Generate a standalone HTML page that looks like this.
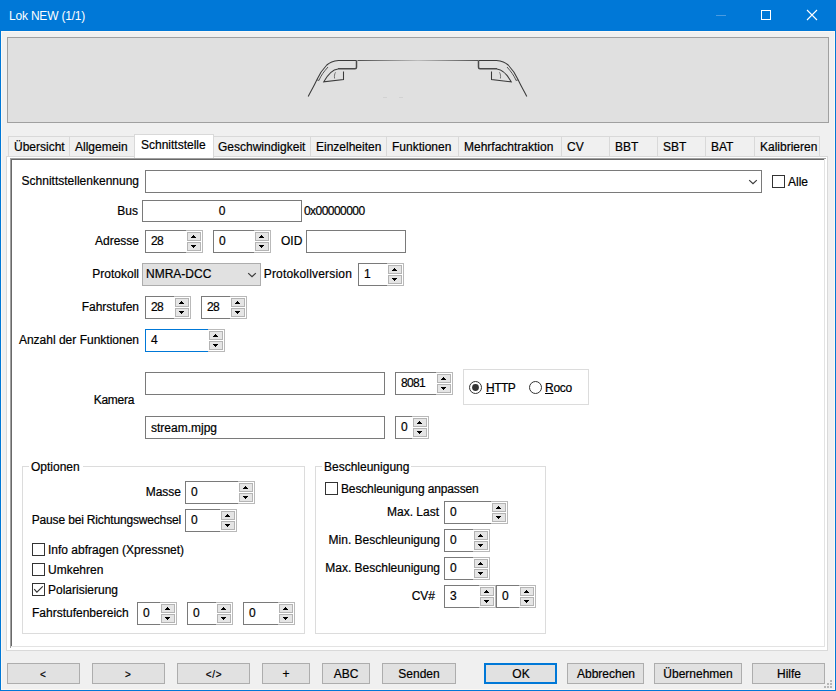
<!DOCTYPE html>
<html><head><meta charset="utf-8"><style>
html,body{margin:0;padding:0;}
body{width:836px;height:691px;overflow:hidden;position:relative;background:#f0f0f0;font-family:"Liberation Sans", sans-serif;font-size:12px;}
body div, body svg{position:absolute;box-sizing:content-box;}
.t{white-space:nowrap;line-height:14px;font-size:12px;color:#000;-webkit-text-stroke:0.2px currentColor;}
</style></head><body>

<div style="left:0px;top:0px;width:836px;height:31px;background:#0078d7"></div>
<div style="left:0px;top:0px;width:1px;height:691px;background:#0078d7"></div>
<div style="left:835px;top:0px;width:1px;height:691px;background:#0078d7"></div>
<div style="left:0px;top:690px;width:836px;height:1px;background:#0078d7"></div>
<div style="left:1px;top:31px;width:834px;height:1px;background:#fbf8f4"></div>
<div style="left:1px;top:31px;width:1px;height:659px;background:#fbf8f4"></div>
<div style="left:834px;top:31px;width:1px;height:659px;background:#fbf8f4"></div>
<div style="left:1px;top:689px;width:834px;height:1px;background:#fbf8f4"></div>
<div class="t" style="left:9px;top:9px;color:#fff;letter-spacing:-0.2px;-webkit-text-stroke:0">Lok NEW (1/1)</div>
<div style="left:716px;top:15px;width:10px;height:1px;background:#4a9be0"></div>
<div style="left:761px;top:10px;width:8px;height:8px;border:1px solid #fff;background:transparent;"></div>
<svg style="left:806px;top:9px" width="12" height="12"><path d="M1 1L11 11M11 1L1 11" stroke="#fff" stroke-width="1.1" fill="none"/></svg>
<div style="left:7px;top:37px;width:820px;height:84px;border:1px solid #a0a0a0;background:#e0e0e0;"></div>
<svg style="left:0;top:0" width="836" height="130">
<defs><linearGradient id="rg" gradientUnits="userSpaceOnUse" x1="358" x2="478" y1="0" y2="0"><stop offset="0" stop-color="#505050"/><stop offset="0.5" stop-color="#bdbdbd"/><stop offset="1" stop-color="#505050"/></linearGradient>

</defs>
<g fill="none" stroke="#3a3a3a">
<path d="M356.5 60.5H338.5C333.5 61 329.5 62.5 326.8 65C322 70 319 75 317 79.5C314 86 311 91 308.2 96.5" stroke-width="1.05"/>
<path d="M328 67C324 71.5 321 75.5 319 80.2" stroke-width="0.9" stroke="#444"/>
<path d="M317 79.8L319.2 80.5" stroke-width="0.9" stroke="#444"/>
<path d="M356.5 60.5V67.3Q356.5 68.8 355 68.8H338" stroke-width="1.5" stroke="#4a4a4a"/>
<path d="M338 69C333 69.5 329 72.5 323.8 81.8L343.5 79.5V71.5" stroke-width="1.05"/>
<path d="M335.5 72.3C334.5 74 334.2 76 334.6 78.5" stroke-width="0.9" stroke="#666"/>
</g>
<g fill="none" stroke="#3a3a3a" transform="translate(835,0) scale(-1,1)">
<path d="M356.5 60.5H338.5C333.5 61 329.5 62.5 326.8 65C322 70 319 75 317 79.5C314 86 311 91 308.2 96.5" stroke-width="1.05"/>
<path d="M328 67C324 71.5 321 75.5 319 80.2" stroke-width="0.9" stroke="#444"/>
<path d="M317 79.8L319.2 80.5" stroke-width="0.9" stroke="#444"/>
<path d="M356.5 60.5V67.3Q356.5 68.8 355 68.8H338" stroke-width="1.5" stroke="#4a4a4a"/>
<path d="M338 69C333 69.5 329 72.5 323.8 81.8L343.5 79.5V71.5" stroke-width="1.05"/>
<path d="M335.5 72.3C334.5 74 334.2 76 334.6 78.5" stroke-width="0.9" stroke="#666"/>
</g>
<path d="M357.5 60.5H478" stroke="url(#rg)" stroke-width="1" fill="none"/><rect x="383" y="97" width="4" height="1" fill="#d2d2d2"/><rect x="399" y="97" width="4" height="1" fill="#d2d2d2"/>
</svg>
<div style="left:6px;top:156px;width:820px;height:493px;border:1px solid #d9d9d9;background:#fff;"></div>
<div style="left:8px;top:136px;width:60px;height:19px;border:1px solid #d9d9d9;background:#f0f0f0;"></div>
<div class="t" style="left:14px;top:140px;color:#000;">Übersicht</div>
<div style="left:69px;top:136px;width:66px;height:19px;border:1px solid #d9d9d9;background:#f0f0f0;"></div>
<div class="t" style="left:75px;top:140px;color:#000;">Allgemein</div>
<div style="left:212px;top:136px;width:97px;height:19px;border:1px solid #d9d9d9;background:#f0f0f0;"></div>
<div class="t" style="left:218px;top:140px;color:#000;">Geschwindigkeit</div>
<div style="left:310px;top:136px;width:75px;height:19px;border:1px solid #d9d9d9;background:#f0f0f0;"></div>
<div class="t" style="left:316px;top:140px;color:#000;">Einzelheiten</div>
<div style="left:386px;top:136px;width:71px;height:19px;border:1px solid #d9d9d9;background:#f0f0f0;"></div>
<div class="t" style="left:392px;top:140px;color:#000;">Funktionen</div>
<div style="left:458px;top:136px;width:102px;height:19px;border:1px solid #d9d9d9;background:#f0f0f0;"></div>
<div class="t" style="left:464px;top:140px;color:#000;">Mehrfachtraktion</div>
<div style="left:561px;top:136px;width:47px;height:19px;border:1px solid #d9d9d9;background:#f0f0f0;"></div>
<div class="t" style="left:567px;top:140px;color:#000;">CV</div>
<div style="left:609px;top:136px;width:47px;height:19px;border:1px solid #d9d9d9;background:#f0f0f0;"></div>
<div class="t" style="left:615px;top:140px;color:#000;">BBT</div>
<div style="left:657px;top:136px;width:47px;height:19px;border:1px solid #d9d9d9;background:#f0f0f0;"></div>
<div class="t" style="left:663px;top:140px;color:#000;">SBT</div>
<div style="left:705px;top:136px;width:48px;height:19px;border:1px solid #d9d9d9;background:#f0f0f0;"></div>
<div class="t" style="left:711px;top:140px;color:#000;">BAT</div>
<div style="left:754px;top:136px;width:64px;height:19px;border:1px solid #d9d9d9;background:#f0f0f0;"></div>
<div class="t" style="left:760px;top:140px;color:#000;">Kalibrieren</div>
<div style="left:134px;top:134px;width:78px;height:23px;border:1px solid #d9d9d9;border-bottom:none;background:#fff"></div>
<div class="t" style="left:141px;top:138px;color:#000;">Schnittstelle</div>
<div style="left:10px;top:158px;width:816px;height:1px;background:#a0a0a0"></div>
<div style="left:10px;top:158px;width:1px;height:490px;background:#a0a0a0"></div>
<div style="left:11px;top:159px;width:814px;height:1px;background:#696969"></div>
<div style="left:11px;top:159px;width:1px;height:488px;background:#696969"></div>
<div style="left:11px;top:646px;width:814px;height:1px;background:#e3e3e3"></div>
<div style="left:824px;top:159px;width:1px;height:488px;background:#e3e3e3"></div>
<div class="t" style="right:697px;top:174px;color:#000;text-align:right;">Schnittstellenkennung</div>
<div style="left:145px;top:170px;width:615px;height:21px;border:1px solid #7a7a7a;background:#fff;"></div>
<svg style="left:748px;top:179px" width="11" height="7"><path d="M1.2 1.1L5 4.7L8.8 1.1" fill="none" stroke="#3a3a3a" stroke-width="1.2"/></svg>
<div style="left:772px;top:175px;width:11px;height:11px;border:1px solid #333;background:#fff;"></div>
<div class="t" style="left:788px;top:175px;color:#000;">Alle</div>
<div class="t" style="right:698px;top:204px;color:#000;text-align:right;">Bus</div>
<div style="left:142px;top:200px;width:158px;height:20px;border:1px solid #7a7a7a;background:#fff;"></div>
<div class="t" style="left:22px;width:400px;top:204px;color:#000;text-align:center;">0</div>
<div class="t" style="left:304px;top:204px;color:#000;letter-spacing:-0.55px">0x00000000</div>
<div class="t" style="right:697px;top:234px;color:#000;text-align:right;">Adresse</div>
<div style="left:145px;top:230px;width:58px;height:23px;background:#fff"></div>
<div style="left:145px;top:230px;width:41px;height:1px;background:#7a7a7a"></div>
<div style="left:145px;top:252px;width:41px;height:1px;background:#7a7a7a"></div>
<div style="left:145px;top:230px;width:1px;height:23px;background:#7a7a7a"></div>
<div style="left:186px;top:230px;width:17px;height:1px;background:#b9b9b9"></div>
<div style="left:186px;top:252px;width:17px;height:1px;background:#b9b9b9"></div>
<div style="left:202px;top:230px;width:1px;height:23px;background:#b9b9b9"></div>
<div style="left:187px;top:232px;width:12px;height:7px;border:1px solid #b4b4b4;background:#e5e5e5;"></div>
<div style="left:187px;top:242px;width:12px;height:7px;border:1px solid #b4b4b4;background:#e5e5e5;"></div>
<div class="t" style="left:151px;top:234px;color:#000;letter-spacing:-0.7px">28</div>
<div style="left:213px;top:230px;width:58px;height:23px;background:#fff"></div>
<div style="left:213px;top:230px;width:41px;height:1px;background:#7a7a7a"></div>
<div style="left:213px;top:252px;width:41px;height:1px;background:#7a7a7a"></div>
<div style="left:213px;top:230px;width:1px;height:23px;background:#7a7a7a"></div>
<div style="left:254px;top:230px;width:17px;height:1px;background:#b9b9b9"></div>
<div style="left:254px;top:252px;width:17px;height:1px;background:#b9b9b9"></div>
<div style="left:270px;top:230px;width:1px;height:23px;background:#b9b9b9"></div>
<div style="left:255px;top:232px;width:12px;height:7px;border:1px solid #b4b4b4;background:#e5e5e5;"></div>
<div style="left:255px;top:242px;width:12px;height:7px;border:1px solid #b4b4b4;background:#e5e5e5;"></div>
<div class="t" style="left:219px;top:234px;color:#000;letter-spacing:-0.7px">0</div>
<div class="t" style="left:281px;top:234px;color:#000;">OID</div>
<div style="left:306px;top:230px;width:98px;height:21px;border:1px solid #7a7a7a;background:#fff;"></div>
<div class="t" style="right:697px;top:267px;color:#000;text-align:right;">Protokoll</div>
<div style="left:142px;top:263px;width:117px;height:21px;border:1px solid #adadad;background:#e1e1e1;"></div>
<div class="t" style="left:146px;top:267px;color:#000;">NMRA-DCC</div>
<svg style="left:247px;top:272px" width="11" height="7"><path d="M1.2 1.1L5 4.7L8.8 1.1" fill="none" stroke="#3a3a3a" stroke-width="1.2"/></svg>
<div class="t" style="right:484px;top:267px;color:#000;text-align:right;letter-spacing:0.18px">Protokollversion</div>
<div style="left:358px;top:263px;width:46px;height:23px;background:#fff"></div>
<div style="left:358px;top:263px;width:29px;height:1px;background:#7a7a7a"></div>
<div style="left:358px;top:285px;width:29px;height:1px;background:#7a7a7a"></div>
<div style="left:358px;top:263px;width:1px;height:23px;background:#7a7a7a"></div>
<div style="left:387px;top:263px;width:17px;height:1px;background:#b9b9b9"></div>
<div style="left:387px;top:285px;width:17px;height:1px;background:#b9b9b9"></div>
<div style="left:403px;top:263px;width:1px;height:23px;background:#b9b9b9"></div>
<div style="left:388px;top:265px;width:12px;height:7px;border:1px solid #b4b4b4;background:#e5e5e5;"></div>
<div style="left:388px;top:275px;width:12px;height:7px;border:1px solid #b4b4b4;background:#e5e5e5;"></div>
<div class="t" style="left:364px;top:267px;color:#000;letter-spacing:-0.7px">1</div>
<div class="t" style="right:697px;top:300px;color:#000;text-align:right;">Fahrstufen</div>
<div style="left:145px;top:296px;width:46px;height:23px;background:#fff"></div>
<div style="left:145px;top:296px;width:29px;height:1px;background:#7a7a7a"></div>
<div style="left:145px;top:318px;width:29px;height:1px;background:#7a7a7a"></div>
<div style="left:145px;top:296px;width:1px;height:23px;background:#7a7a7a"></div>
<div style="left:174px;top:296px;width:17px;height:1px;background:#b9b9b9"></div>
<div style="left:174px;top:318px;width:17px;height:1px;background:#b9b9b9"></div>
<div style="left:190px;top:296px;width:1px;height:23px;background:#b9b9b9"></div>
<div style="left:175px;top:298px;width:12px;height:7px;border:1px solid #b4b4b4;background:#e5e5e5;"></div>
<div style="left:175px;top:308px;width:12px;height:7px;border:1px solid #b4b4b4;background:#e5e5e5;"></div>
<div class="t" style="left:151px;top:300px;color:#000;letter-spacing:-0.7px">28</div>
<div style="left:201px;top:296px;width:46px;height:23px;background:#fff"></div>
<div style="left:201px;top:296px;width:29px;height:1px;background:#7a7a7a"></div>
<div style="left:201px;top:318px;width:29px;height:1px;background:#7a7a7a"></div>
<div style="left:201px;top:296px;width:1px;height:23px;background:#7a7a7a"></div>
<div style="left:230px;top:296px;width:17px;height:1px;background:#b9b9b9"></div>
<div style="left:230px;top:318px;width:17px;height:1px;background:#b9b9b9"></div>
<div style="left:246px;top:296px;width:1px;height:23px;background:#b9b9b9"></div>
<div style="left:231px;top:298px;width:12px;height:7px;border:1px solid #b4b4b4;background:#e5e5e5;"></div>
<div style="left:231px;top:308px;width:12px;height:7px;border:1px solid #b4b4b4;background:#e5e5e5;"></div>
<div class="t" style="left:207px;top:300px;color:#000;letter-spacing:-0.7px">28</div>
<div class="t" style="right:697px;top:333px;color:#000;text-align:right;">Anzahl der Funktionen</div>
<div style="left:145px;top:329px;width:80px;height:23px;background:#fff"></div>
<div style="left:145px;top:329px;width:63px;height:1px;background:#0078d7"></div>
<div style="left:145px;top:351px;width:63px;height:1px;background:#0078d7"></div>
<div style="left:145px;top:329px;width:1px;height:23px;background:#0078d7"></div>
<div style="left:208px;top:329px;width:17px;height:1px;background:#b9b9b9"></div>
<div style="left:208px;top:351px;width:17px;height:1px;background:#b9b9b9"></div>
<div style="left:224px;top:329px;width:1px;height:23px;background:#b9b9b9"></div>
<div style="left:209px;top:331px;width:12px;height:7px;border:1px solid #b4b4b4;background:#e5e5e5;"></div>
<div style="left:209px;top:341px;width:12px;height:7px;border:1px solid #b4b4b4;background:#e5e5e5;"></div>
<div class="t" style="left:151px;top:333px;color:#000;letter-spacing:-0.7px">4</div>
<div class="t" style="right:702px;top:393px;color:#000;text-align:right;letter-spacing:-0.3px">Kamera</div>
<div style="left:145px;top:372px;width:238px;height:21px;border:1px solid #7a7a7a;background:#fff;"></div>
<div style="left:395px;top:372px;width:58px;height:23px;background:#fff"></div>
<div style="left:395px;top:372px;width:41px;height:1px;background:#7a7a7a"></div>
<div style="left:395px;top:394px;width:41px;height:1px;background:#7a7a7a"></div>
<div style="left:395px;top:372px;width:1px;height:23px;background:#7a7a7a"></div>
<div style="left:436px;top:372px;width:17px;height:1px;background:#b9b9b9"></div>
<div style="left:436px;top:394px;width:17px;height:1px;background:#b9b9b9"></div>
<div style="left:452px;top:372px;width:1px;height:23px;background:#b9b9b9"></div>
<div style="left:437px;top:374px;width:12px;height:7px;border:1px solid #b4b4b4;background:#e5e5e5;"></div>
<div style="left:437px;top:384px;width:12px;height:7px;border:1px solid #b4b4b4;background:#e5e5e5;"></div>
<div class="t" style="left:401px;top:376px;color:#000;letter-spacing:-0.7px">8081</div>
<div style="left:145px;top:416px;width:238px;height:21px;border:1px solid #7a7a7a;background:#fff;"></div>
<div class="t" style="left:151px;top:421px;color:#000;">stream.mjpg</div>
<div style="left:395px;top:416px;width:34px;height:23px;background:#fff"></div>
<div style="left:395px;top:416px;width:17px;height:1px;background:#7a7a7a"></div>
<div style="left:395px;top:438px;width:17px;height:1px;background:#7a7a7a"></div>
<div style="left:395px;top:416px;width:1px;height:23px;background:#7a7a7a"></div>
<div style="left:412px;top:416px;width:17px;height:1px;background:#b9b9b9"></div>
<div style="left:412px;top:438px;width:17px;height:1px;background:#b9b9b9"></div>
<div style="left:428px;top:416px;width:1px;height:23px;background:#b9b9b9"></div>
<div style="left:413px;top:418px;width:12px;height:7px;border:1px solid #b4b4b4;background:#e5e5e5;"></div>
<div style="left:413px;top:428px;width:12px;height:7px;border:1px solid #b4b4b4;background:#e5e5e5;"></div>
<div class="t" style="left:401px;top:420px;color:#000;letter-spacing:-0.7px">0</div>
<div style="left:463px;top:369px;width:124px;height:34px;border:1px solid #dcdcdc;background:transparent;"></div>
<svg style="left:468px;top:380px" width="15" height="15"><circle cx="7.5" cy="7.5" r="6" fill="#fff" stroke="#333" stroke-width="1"/><circle cx="7.5" cy="7.5" r="3.4" fill="#333"/></svg>
<div class="t" style="left:486px;top:381px;color:#000;letter-spacing:-0.55px"><u>H</u>TTP</div>
<svg style="left:528px;top:380px" width="15" height="15"><circle cx="7.5" cy="7.5" r="6" fill="#fff" stroke="#333" stroke-width="1"/></svg>
<div class="t" style="left:545px;top:381px;color:#000;letter-spacing:-0.25px"><u>R</u>oco</div>
<div style="left:22px;top:466px;width:281px;height:166px;border:1px solid #dcdcdc;background:transparent;"></div>
<div style="left:29px;top:460px;width:54px;height:12px;background:#fff"></div>
<div class="t" style="left:31px;top:460px;color:#000;">Optionen</div>
<div class="t" style="right:655px;top:485px;color:#000;text-align:right;">Masse</div>
<div style="left:185px;top:481px;width:70px;height:23px;background:#fff"></div>
<div style="left:185px;top:481px;width:53px;height:1px;background:#7a7a7a"></div>
<div style="left:185px;top:503px;width:53px;height:1px;background:#7a7a7a"></div>
<div style="left:185px;top:481px;width:1px;height:23px;background:#7a7a7a"></div>
<div style="left:238px;top:481px;width:17px;height:1px;background:#b9b9b9"></div>
<div style="left:238px;top:503px;width:17px;height:1px;background:#b9b9b9"></div>
<div style="left:254px;top:481px;width:1px;height:23px;background:#b9b9b9"></div>
<div style="left:239px;top:483px;width:12px;height:7px;border:1px solid #b4b4b4;background:#e5e5e5;"></div>
<div style="left:239px;top:493px;width:12px;height:7px;border:1px solid #b4b4b4;background:#e5e5e5;"></div>
<div class="t" style="left:191px;top:485px;color:#000;letter-spacing:-0.7px">0</div>
<div class="t" style="right:655px;top:513px;color:#000;text-align:right;letter-spacing:-0.16px">Pause bei Richtungswechsel</div>
<div style="left:185px;top:509px;width:52px;height:23px;background:#fff"></div>
<div style="left:185px;top:509px;width:35px;height:1px;background:#7a7a7a"></div>
<div style="left:185px;top:531px;width:35px;height:1px;background:#7a7a7a"></div>
<div style="left:185px;top:509px;width:1px;height:23px;background:#7a7a7a"></div>
<div style="left:220px;top:509px;width:17px;height:1px;background:#b9b9b9"></div>
<div style="left:220px;top:531px;width:17px;height:1px;background:#b9b9b9"></div>
<div style="left:236px;top:509px;width:1px;height:23px;background:#b9b9b9"></div>
<div style="left:221px;top:511px;width:12px;height:7px;border:1px solid #b4b4b4;background:#e5e5e5;"></div>
<div style="left:221px;top:521px;width:12px;height:7px;border:1px solid #b4b4b4;background:#e5e5e5;"></div>
<div class="t" style="left:191px;top:513px;color:#000;letter-spacing:-0.7px">0</div>
<div style="left:32px;top:543px;width:11px;height:11px;border:1px solid #333;background:#fff;"></div>
<div class="t" style="left:48px;top:543px;color:#000;">Info abfragen (Xpressnet)</div>
<div style="left:32px;top:563px;width:11px;height:11px;border:1px solid #333;background:#fff;"></div>
<div class="t" style="left:48px;top:563px;color:#000;">Umkehren</div>
<div style="left:32px;top:583px;width:11px;height:11px;border:1px solid #333;background:#fff;"></div>
<svg style="left:32px;top:583px" width="13" height="13"><path d="M2.2 6.1L4.9 9.1L10.8 3.3" fill="none" stroke="#333" stroke-width="1.15"/></svg>
<div class="t" style="left:48px;top:583px;color:#000;">Polarisierung</div>
<div class="t" style="left:32px;top:606px;color:#000;">Fahrstufenbereich</div>
<div style="left:137px;top:602px;width:40px;height:23px;background:#fff"></div>
<div style="left:137px;top:602px;width:23px;height:1px;background:#7a7a7a"></div>
<div style="left:137px;top:624px;width:23px;height:1px;background:#7a7a7a"></div>
<div style="left:137px;top:602px;width:1px;height:23px;background:#7a7a7a"></div>
<div style="left:160px;top:602px;width:17px;height:1px;background:#b9b9b9"></div>
<div style="left:160px;top:624px;width:17px;height:1px;background:#b9b9b9"></div>
<div style="left:176px;top:602px;width:1px;height:23px;background:#b9b9b9"></div>
<div style="left:161px;top:604px;width:12px;height:7px;border:1px solid #b4b4b4;background:#e5e5e5;"></div>
<div style="left:161px;top:614px;width:12px;height:7px;border:1px solid #b4b4b4;background:#e5e5e5;"></div>
<div class="t" style="left:143px;top:606px;color:#000;letter-spacing:-0.7px">0</div>
<div style="left:187px;top:602px;width:46px;height:23px;background:#fff"></div>
<div style="left:187px;top:602px;width:29px;height:1px;background:#7a7a7a"></div>
<div style="left:187px;top:624px;width:29px;height:1px;background:#7a7a7a"></div>
<div style="left:187px;top:602px;width:1px;height:23px;background:#7a7a7a"></div>
<div style="left:216px;top:602px;width:17px;height:1px;background:#b9b9b9"></div>
<div style="left:216px;top:624px;width:17px;height:1px;background:#b9b9b9"></div>
<div style="left:232px;top:602px;width:1px;height:23px;background:#b9b9b9"></div>
<div style="left:217px;top:604px;width:12px;height:7px;border:1px solid #b4b4b4;background:#e5e5e5;"></div>
<div style="left:217px;top:614px;width:12px;height:7px;border:1px solid #b4b4b4;background:#e5e5e5;"></div>
<div class="t" style="left:193px;top:606px;color:#000;letter-spacing:-0.7px">0</div>
<div style="left:243px;top:602px;width:52px;height:23px;background:#fff"></div>
<div style="left:243px;top:602px;width:35px;height:1px;background:#7a7a7a"></div>
<div style="left:243px;top:624px;width:35px;height:1px;background:#7a7a7a"></div>
<div style="left:243px;top:602px;width:1px;height:23px;background:#7a7a7a"></div>
<div style="left:278px;top:602px;width:17px;height:1px;background:#b9b9b9"></div>
<div style="left:278px;top:624px;width:17px;height:1px;background:#b9b9b9"></div>
<div style="left:294px;top:602px;width:1px;height:23px;background:#b9b9b9"></div>
<div style="left:279px;top:604px;width:12px;height:7px;border:1px solid #b4b4b4;background:#e5e5e5;"></div>
<div style="left:279px;top:614px;width:12px;height:7px;border:1px solid #b4b4b4;background:#e5e5e5;"></div>
<div class="t" style="left:249px;top:606px;color:#000;letter-spacing:-0.7px">0</div>
<div style="left:315px;top:466px;width:229px;height:166px;border:1px solid #dcdcdc;background:transparent;"></div>
<div style="left:322px;top:460px;width:89px;height:12px;background:#fff"></div>
<div class="t" style="left:324px;top:460px;color:#000;">Beschleunigung</div>
<div style="left:325px;top:482px;width:11px;height:11px;border:1px solid #333;background:#fff;"></div>
<div class="t" style="left:341px;top:482px;color:#000;letter-spacing:-0.14px">Beschleunigung anpassen</div>
<div class="t" style="right:397px;top:505px;color:#000;text-align:right;">Max. Last</div>
<div style="left:444px;top:501px;width:64px;height:23px;background:#fff"></div>
<div style="left:444px;top:501px;width:47px;height:1px;background:#7a7a7a"></div>
<div style="left:444px;top:523px;width:47px;height:1px;background:#7a7a7a"></div>
<div style="left:444px;top:501px;width:1px;height:23px;background:#7a7a7a"></div>
<div style="left:491px;top:501px;width:17px;height:1px;background:#b9b9b9"></div>
<div style="left:491px;top:523px;width:17px;height:1px;background:#b9b9b9"></div>
<div style="left:507px;top:501px;width:1px;height:23px;background:#b9b9b9"></div>
<div style="left:492px;top:503px;width:12px;height:7px;border:1px solid #b4b4b4;background:#e5e5e5;"></div>
<div style="left:492px;top:513px;width:12px;height:7px;border:1px solid #b4b4b4;background:#e5e5e5;"></div>
<div class="t" style="left:450px;top:505px;color:#000;letter-spacing:-0.7px">0</div>
<div class="t" style="right:396px;top:533px;color:#000;text-align:right;">Min. Beschleunigung</div>
<div style="left:444px;top:529px;width:46px;height:23px;background:#fff"></div>
<div style="left:444px;top:529px;width:29px;height:1px;background:#7a7a7a"></div>
<div style="left:444px;top:551px;width:29px;height:1px;background:#7a7a7a"></div>
<div style="left:444px;top:529px;width:1px;height:23px;background:#7a7a7a"></div>
<div style="left:473px;top:529px;width:17px;height:1px;background:#b9b9b9"></div>
<div style="left:473px;top:551px;width:17px;height:1px;background:#b9b9b9"></div>
<div style="left:489px;top:529px;width:1px;height:23px;background:#b9b9b9"></div>
<div style="left:474px;top:531px;width:12px;height:7px;border:1px solid #b4b4b4;background:#e5e5e5;"></div>
<div style="left:474px;top:541px;width:12px;height:7px;border:1px solid #b4b4b4;background:#e5e5e5;"></div>
<div class="t" style="left:450px;top:533px;color:#000;letter-spacing:-0.7px">0</div>
<div class="t" style="right:396px;top:561px;color:#000;text-align:right;">Max. Beschleunigung</div>
<div style="left:444px;top:557px;width:46px;height:23px;background:#fff"></div>
<div style="left:444px;top:557px;width:29px;height:1px;background:#7a7a7a"></div>
<div style="left:444px;top:579px;width:29px;height:1px;background:#7a7a7a"></div>
<div style="left:444px;top:557px;width:1px;height:23px;background:#7a7a7a"></div>
<div style="left:473px;top:557px;width:17px;height:1px;background:#b9b9b9"></div>
<div style="left:473px;top:579px;width:17px;height:1px;background:#b9b9b9"></div>
<div style="left:489px;top:557px;width:1px;height:23px;background:#b9b9b9"></div>
<div style="left:474px;top:559px;width:12px;height:7px;border:1px solid #b4b4b4;background:#e5e5e5;"></div>
<div style="left:474px;top:569px;width:12px;height:7px;border:1px solid #b4b4b4;background:#e5e5e5;"></div>
<div class="t" style="left:450px;top:561px;color:#000;letter-spacing:-0.7px">0</div>
<div class="t" style="right:401px;top:589px;color:#000;text-align:right;">CV#</div>
<div style="left:444px;top:585px;width:52px;height:23px;background:#fff"></div>
<div style="left:444px;top:585px;width:35px;height:1px;background:#7a7a7a"></div>
<div style="left:444px;top:607px;width:35px;height:1px;background:#7a7a7a"></div>
<div style="left:444px;top:585px;width:1px;height:23px;background:#7a7a7a"></div>
<div style="left:479px;top:585px;width:17px;height:1px;background:#b9b9b9"></div>
<div style="left:479px;top:607px;width:17px;height:1px;background:#b9b9b9"></div>
<div style="left:495px;top:585px;width:1px;height:23px;background:#b9b9b9"></div>
<div style="left:480px;top:587px;width:12px;height:7px;border:1px solid #b4b4b4;background:#e5e5e5;"></div>
<div style="left:480px;top:597px;width:12px;height:7px;border:1px solid #b4b4b4;background:#e5e5e5;"></div>
<div class="t" style="left:450px;top:589px;color:#000;letter-spacing:-0.7px">3</div>
<div style="left:496px;top:585px;width:40px;height:23px;background:#fff"></div>
<div style="left:496px;top:585px;width:23px;height:1px;background:#7a7a7a"></div>
<div style="left:496px;top:607px;width:23px;height:1px;background:#7a7a7a"></div>
<div style="left:496px;top:585px;width:1px;height:23px;background:#7a7a7a"></div>
<div style="left:519px;top:585px;width:17px;height:1px;background:#b9b9b9"></div>
<div style="left:519px;top:607px;width:17px;height:1px;background:#b9b9b9"></div>
<div style="left:535px;top:585px;width:1px;height:23px;background:#b9b9b9"></div>
<div style="left:520px;top:587px;width:12px;height:7px;border:1px solid #b4b4b4;background:#e5e5e5;"></div>
<div style="left:520px;top:597px;width:12px;height:7px;border:1px solid #b4b4b4;background:#e5e5e5;"></div>
<div class="t" style="left:502px;top:589px;color:#000;letter-spacing:-0.7px">0</div>
<div style="left:7px;top:663px;width:71px;height:19px;border:1px solid #adadad;background:#e1e1e1;"></div>
<div class="t" style="left:-157px;width:400px;top:668px;color:#000;text-align:center;font-size:10px">&lt;</div>
<div style="left:92px;top:663px;width:71px;height:19px;border:1px solid #adadad;background:#e1e1e1;"></div>
<div class="t" style="left:-72px;width:400px;top:668px;color:#000;text-align:center;font-size:10px">&gt;</div>
<div style="left:177px;top:663px;width:71px;height:19px;border:1px solid #adadad;background:#e1e1e1;"></div>
<div class="t" style="left:14px;width:400px;top:668px;color:#000;text-align:center;font-size:10px;letter-spacing:0.6px">&lt;/&gt;</div>
<div style="left:262px;top:663px;width:46px;height:19px;border:1px solid #adadad;background:#e1e1e1;"></div>
<div class="t" style="left:86px;width:400px;top:667px;color:#000;text-align:center;">+</div>
<div style="left:322px;top:663px;width:46px;height:19px;border:1px solid #adadad;background:#e1e1e1;"></div>
<div class="t" style="left:146px;width:400px;top:667px;color:#000;text-align:center;">ABC</div>
<div style="left:382px;top:663px;width:72px;height:19px;border:1px solid #adadad;background:#e1e1e1;"></div>
<div class="t" style="left:219px;width:400px;top:667px;color:#000;text-align:center;">Senden</div>
<div style="left:484px;top:663px;width:69px;height:17px;border:2px solid #0078d7;background:#e1e1e1"></div>
<div class="t" style="left:321px;width:400px;top:667px;color:#000;text-align:center;">OK</div>
<div style="left:567px;top:663px;width:75px;height:19px;border:1px solid #adadad;background:#e1e1e1;"></div>
<div class="t" style="left:406px;width:400px;top:667px;color:#000;text-align:center;">Abbrechen</div>
<div style="left:654px;top:663px;width:86px;height:19px;border:1px solid #adadad;background:#e1e1e1;"></div>
<div class="t" style="left:498px;width:400px;top:667px;color:#000;text-align:center;">Übernehmen</div>
<div style="left:752px;top:663px;width:71px;height:19px;border:1px solid #adadad;background:#e1e1e1;"></div>
<div class="t" style="left:589px;width:400px;top:667px;color:#000;text-align:center;">Hilfe</div>
<div style="left:830px;top:680px;width:2px;height:2px;background:#b8b8b8"></div>
<div style="left:827px;top:683px;width:2px;height:2px;background:#b8b8b8"></div>
<div style="left:830px;top:683px;width:2px;height:2px;background:#b8b8b8"></div>
<div style="left:824px;top:686px;width:2px;height:2px;background:#b8b8b8"></div>
<div style="left:827px;top:686px;width:2px;height:2px;background:#b8b8b8"></div>
<div style="left:830px;top:686px;width:2px;height:2px;background:#b8b8b8"></div>
<svg style="left:0;top:0" width="836" height="691" shape-rendering="crispEdges"><path fill="#000" d="M193 235h1v1h1v1h1v1h-5v-1h1v-1h1zM191 245h5v1h-1v1h-1v1h-1v-1h-1v-1h-1zM261 235h1v1h1v1h1v1h-5v-1h1v-1h1zM259 245h5v1h-1v1h-1v1h-1v-1h-1v-1h-1zM394 268h1v1h1v1h1v1h-5v-1h1v-1h1zM392 278h5v1h-1v1h-1v1h-1v-1h-1v-1h-1zM181 301h1v1h1v1h1v1h-5v-1h1v-1h1zM179 311h5v1h-1v1h-1v1h-1v-1h-1v-1h-1zM237 301h1v1h1v1h1v1h-5v-1h1v-1h1zM235 311h5v1h-1v1h-1v1h-1v-1h-1v-1h-1zM215 334h1v1h1v1h1v1h-5v-1h1v-1h1zM213 344h5v1h-1v1h-1v1h-1v-1h-1v-1h-1zM443 377h1v1h1v1h1v1h-5v-1h1v-1h1zM441 387h5v1h-1v1h-1v1h-1v-1h-1v-1h-1zM419 421h1v1h1v1h1v1h-5v-1h1v-1h1zM417 431h5v1h-1v1h-1v1h-1v-1h-1v-1h-1zM245 486h1v1h1v1h1v1h-5v-1h1v-1h1zM243 496h5v1h-1v1h-1v1h-1v-1h-1v-1h-1zM227 514h1v1h1v1h1v1h-5v-1h1v-1h1zM225 524h5v1h-1v1h-1v1h-1v-1h-1v-1h-1zM167 607h1v1h1v1h1v1h-5v-1h1v-1h1zM165 617h5v1h-1v1h-1v1h-1v-1h-1v-1h-1zM223 607h1v1h1v1h1v1h-5v-1h1v-1h1zM221 617h5v1h-1v1h-1v1h-1v-1h-1v-1h-1zM285 607h1v1h1v1h1v1h-5v-1h1v-1h1zM283 617h5v1h-1v1h-1v1h-1v-1h-1v-1h-1zM498 506h1v1h1v1h1v1h-5v-1h1v-1h1zM496 516h5v1h-1v1h-1v1h-1v-1h-1v-1h-1zM480 534h1v1h1v1h1v1h-5v-1h1v-1h1zM478 544h5v1h-1v1h-1v1h-1v-1h-1v-1h-1zM480 562h1v1h1v1h1v1h-5v-1h1v-1h1zM478 572h5v1h-1v1h-1v1h-1v-1h-1v-1h-1zM486 590h1v1h1v1h1v1h-5v-1h1v-1h1zM484 600h5v1h-1v1h-1v1h-1v-1h-1v-1h-1zM526 590h1v1h1v1h1v1h-5v-1h1v-1h1zM524 600h5v1h-1v1h-1v1h-1v-1h-1v-1h-1z"/></svg>
</body></html>
